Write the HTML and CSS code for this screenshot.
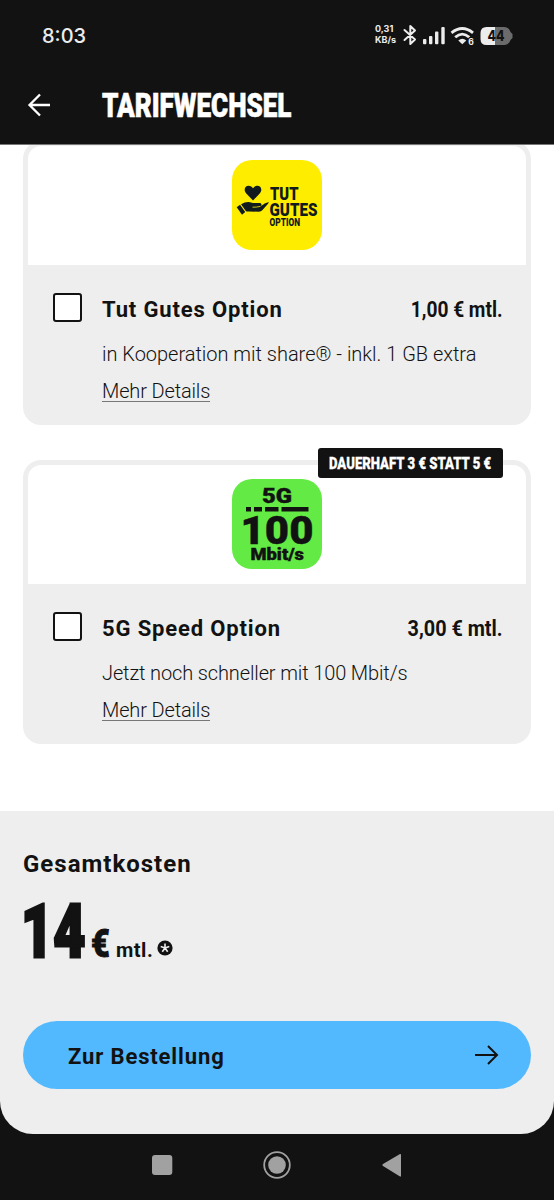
FILE: index.html
```html
<!DOCTYPE html>
<html lang="de">
<head>
<meta charset="utf-8">
<title>Tarifwechsel</title>
<link rel="stylesheet" href="styles.css">
</head>
<body>
<div class="phone">
  <header class="top">
    <div class="status">
      <span class="clock">8:03</span>
      <span class="net"><span>0,31</span><span>KB/s</span></span>
      <svg class="status-icons" width="112" height="24" viewBox="0 0 112 24">
        <path d="M3.500 7 14 16.500 9.300 21V3L14 7.500 3.500 17" fill="none" stroke="#ececec" stroke-width="2" stroke-linejoin="round" stroke-linecap="round"/>
        <g fill="#ececec"><rect x="22" y="16" width="3.400" height="5.200" rx="1"/><rect x="28" y="13" width="3.400" height="8.200" rx="1"/><rect x="34" y="8.500" width="3.400" height="12.700" rx="1"/><rect x="40.300" y="4" width="3.400" height="17.200" rx="1"/></g>
        <g fill="none" stroke="#ececec" stroke-width="2.800"><path d="M50.500 9.800Q61.300 1.200 72 9.800"/><path d="M54.200 14.300Q61.300 8 68.300 14.300"/></g>
        <path d="M57.300 17.500Q61.300 14 65.300 17.500L61.300 21.300Z" fill="#ececec"/>
        <text class="wifi-gen" x="67.200" y="21.800">6</text>
        <path d="M85.500 4H94V22H85.500Q79.500 22 79.500 16V10Q79.500 4 85.500 4Z" fill="#ececec"/>
        <path d="M94 4H103Q108 4 109.500 9L111.500 11V15L109.500 17Q108 22 103 22H94Z" fill="#6b6b6b"/>
        <text class="battery" x="86.500" y="18.300" textLength="17" lengthAdjust="spacingAndGlyphs">44</text>
      </svg>
    </div>
    <div class="appbar">
      <svg class="back" width="24" height="24" viewBox="0 0 24 24"><path d="M24 12H3M14 1.500 3.500 12 14 22.500"/></svg>
      <h1>TARIFWECHSEL</h1>
    </div>
  </header>

  <main class="options">
    <article class="card">
      <div class="picture">
        <svg width="90" height="90" viewBox="0 0 90 90">
          <rect width="90" height="90" rx="20" fill="#ffed00"/>
          <path d="M21 40.500 14.300 33.500C9.500 28 16.500 22.500 21 28.300 25.500 22.500 32.500 28 27.700 33.500Z" fill="#111b1d"/>
          <path d="M4.700 47.300 8 44.800 13.200 52 10 54.800Z" fill="#111b1d"/>
          <path d="M9 44.300Q14 41.500 18 42.300L21 43H27.800Q30.200 43.500 29.300 45.500L28.800 46.300Q32.500 43 36.800 42Q36.500 43.500 34.500 45.500L30.500 50Q29 51.500 27 51.700L17 51.500Q14.800 51.600 14 51.300Z" fill="#111b1d"/>
          <path d="M20.500 47.200Q25 47.400 28.500 46.300" fill="none" stroke="#ffed00" stroke-width=".8"/>
          <g class="gutes"><text x="38" y="40" font-size="18.500" textLength="28.500" lengthAdjust="spacingAndGlyphs">TUT</text><text x="37.500" y="55.500" font-size="18.500" textLength="48" lengthAdjust="spacingAndGlyphs">GUTES</text><text x="37.500" y="65.500" font-size="10" textLength="30.500" lengthAdjust="spacingAndGlyphs">OPTION</text></g>
        </svg>
      </div>
      <div class="info">
        <span class="box"></span>
        <div class="copy">
          <div class="line"><h2>Tut Gutes Option</h2><span class="price">1,00 € mtl.</span></div>
          <p>in Kooperation mit share® - inkl. 1 GB extra</p>
          <a>Mehr Details</a>
        </div>
      </div>
    </article>

    <article class="card">
      <span class="tag"><b>DAUERHAFT 3 € STATT 5 €</b></span>
      <div class="picture">
        <svg width="90" height="90" viewBox="0 0 90 90">
          <rect width="90" height="90" rx="20" fill="#64ea45"/>
          <g class="speed"><text x="30" y="23.500" font-size="20.500" textLength="30" lengthAdjust="spacingAndGlyphs">5G</text><text x="8.500" y="65" font-size="39" textLength="73" lengthAdjust="spacingAndGlyphs">100</text><text x="18.500" y="81" font-size="16" textLength="53.500" lengthAdjust="spacingAndGlyphs">Mbit/s</text></g>
          <path d="M14 28h5v4.500h-5zM22 28h8v4.500h-8zM33 28h13.500v4.500H33zM49.500 28H76.500v4.500H49.500z" fill="#121212"/>
        </svg>
      </div>
      <div class="info">
        <span class="box"></span>
        <div class="copy">
          <div class="line"><h2>5G Speed Option</h2><span class="price price-speed">3,00 € mtl.</span></div>
          <p class="desc-speed">Jetzt noch schneller mit 100 Mbit/s</p>
          <a>Mehr Details</a>
        </div>
      </div>
    </article>
  </main>

  <section class="total">
    <h3>Gesamtkosten</h3>
    <div class="sum">
      <span class="amount">14</span><span class="euro">€</span><span class="per">mtl.</span>
      <svg class="note" width="16" height="16" viewBox="0 0 16 16"><circle cx="8" cy="8" r="7.600" fill="#121212"/><path d="M8 8V3.500M8 8 12.300 6.600M8 8 10.700 11.700M8 8 5.300 11.700M8 8 3.700 6.600" stroke="#eee" stroke-width="1.600"/></svg>
    </div>
    <button class="order"><span>Zur Bestellung</span>
      <svg width="24" height="20" viewBox="0 0 24 20"><path d="M1 10H23M14 1 23 10 14 19" fill="none" stroke="#121212" stroke-width="2"/></svg>
    </button>
  </section>

  <nav class="system">
    <svg width="554" height="66" viewBox="0 0 554 66"><g fill="#a1a1a1"><rect x="152" y="21" width="20.300" height="20" rx="3"/><circle cx="277" cy="31" r="8.800"/><path d="M383 30 400 20Q401 19.500 401 21V41.500Q401 43 400 42.500L383 32Q381.500 31 383 30Z"/></g><circle cx="277" cy="31" r="12.800" fill="none" stroke="#a1a1a1" stroke-width="1.800"/></svg>
  </nav>
</div>
</body>
</html>
```
FILE: styles.css
```css
* { box-sizing: border-box; }
body { margin: 0; background: #121212; font-family: Roboto, "Liberation Sans", sans-serif; color: #121212; }
h1, h2, h3, p { margin: 0; white-space: nowrap; }
svg { display: block; flex: none; overflow: visible; }
.phone { width: 554px; height: 1200px; display: flex; flex-direction: column; overflow: hidden; }

.top { height: 145px; flex: none; background: #121212; color: #fff; border-bottom: 1px solid #777; position: relative; z-index: 1; }
.status { height: 66px; display: flex; padding: 23px 0 0 42px; }
.clock { width: 333px; font: 500 20px/26px Inter, sans-serif; color: #ececec; }
.net { width: 25.500px; display: flex; flex-direction: column; font: 700 9px/11px Inter, sans-serif; color: #ececec; white-space: nowrap; }
.wifi-gen { font: 700 8.500px Inter, sans-serif; fill: #ececec; stroke: #121212; stroke-width: 2px; paint-order: stroke; }
.battery { font: 800 14.500px Inter, sans-serif; fill: #121212; }
.appbar { display: flex; align-items: center; height: 78px; padding-left: 26px; }
.back path { fill: none; stroke: #fff; stroke-width: 2.300; }
.appbar h1 { margin-left: 52px; font-size: 33.500px; line-height: 40px; font-weight: 900; transform: scaleX(.778); transform-origin: left; -webkit-text-stroke: .6px #fff; padding-top: 1px; }

.options { height: 666px; flex: none; background: #fff; padding: 0 23px; display: flex; flex-direction: column; gap: 35px; }
.card { position: relative; height: 284px; flex: none; background: #eee; border: 5px solid #eee; border-radius: 18px; }
.card:first-child { margin-top: -4px; }
.picture { height: 118.500px; background: #fff; border-radius: 13px 13px 0 0; display: flex; justify-content: center; padding-top: 14px; }
.gutes { font-weight: 900; fill: #111b1d; }
.speed { font-weight: 900; fill: #121212; stroke: #121212; stroke-width: .4px; }
.info { display: flex; gap: 20px; padding: 28.500px 23px 0 25px; }
.box { width: 29px; height: 29px; flex: none; background: #fff; border: 2.500px solid #121212; border-radius: 3px; }
.copy { flex: 1; padding-top: 2px; }
.line { display: flex; justify-content: space-between; height: 30px; line-height: 30px; }
.line h2 { font-size: 22px; font-weight: 700; letter-spacing: .85px; }
.price { font-size: 22px; font-weight: 700; white-space: nowrap; transform: scaleX(.87); transform-origin: right; }
.price-speed { transform: scaleX(.9); }
.copy p { margin-top: 14px; font-size: 20px; line-height: 30px; font-weight: 350; letter-spacing: -.02px; }
.copy .desc-speed { letter-spacing: -.13px; }
.copy a { display: inline-block; margin-top: 9px; font-size: 20px; line-height: 26px; height: 24px; font-weight: 350; letter-spacing: -.15px; border-bottom: 1px solid #777; }
.tag { position: absolute; right: 23px; top: -17.500px; width: 185px; height: 30px; background: #121212; border-radius: 3px; color: #fff; font-size: 16.500px; line-height: 31px; padding-left: 11px; white-space: nowrap; }
.tag b { display: inline-block; font-weight: 900; transform: scaleX(.795); transform-origin: left; -webkit-text-stroke: .3px #fff; }

.total { height: 323px; flex: none; background: #eee; border-radius: 0 0 33px 33px; padding: 38px 23px 0; }
.total h3 { font-size: 24px; line-height: 30px; font-weight: 700; letter-spacing: 1px; }
.sum { height: 78px; margin-top: 13px; display: flex; align-items: baseline; line-height: 78px; }
.amount { width: 68px; margin-left: -2px; font-size: 75px; font-weight: 900; transform: scaleX(.74); transform-origin: left; -webkit-text-stroke: 3px #121212; }
.euro { width: 25px; margin-left: 2px; font-size: 38px; font-weight: 900; transform: scaleX(.85); transform-origin: left; -webkit-text-stroke: 1px #121212; }
.per { width: 41px; font-size: 20px; font-weight: 700; letter-spacing: .5px; }
.note { align-self: flex-start; margin-top: 47.500px; }
.order { width: 508px; height: 68px; margin-top: 51px; border: 0; border-radius: 34px; background: #52b9ff; color: #121212; display: flex; align-items: center; justify-content: space-between; padding: 0 33px 0 45px; font: 700 22px/30px Roboto, sans-serif; letter-spacing: .87px; }
.order span { padding-top: 3px; }
.system { height: 66px; flex: none; }
```
